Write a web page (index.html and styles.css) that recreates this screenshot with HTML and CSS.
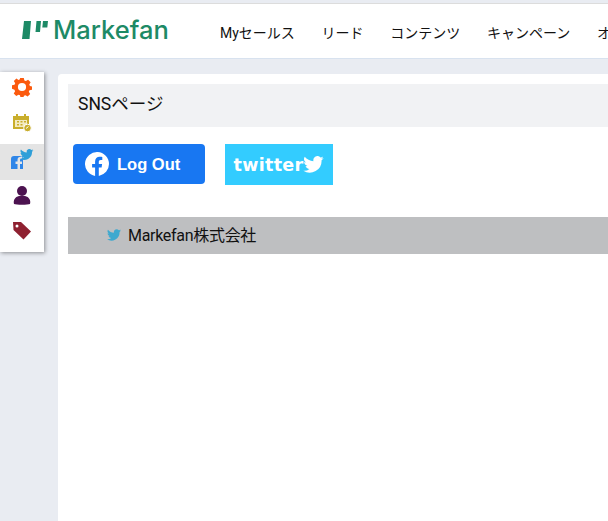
FILE: index.html
```html
<!DOCTYPE html>
<html lang="ja">
<head>
<meta charset="utf-8">
<title>SNSページ</title>
<link rel="stylesheet" href="styles.css">
</head>
<body>
<header class="topbar">
  <div class="logo">
    <svg class="logo-mark" width="26" height="20" viewBox="0 0 26 20"><path fill="#1d8a66" d="M2 1h7l-1.500 18H0zM14.500 1h4.500l-1 11h-4.500zM21 1h5l-.7 6.500h-5z"/></svg>
    <span class="logo-text">Markefan</span>
  </div>
  <nav class="nav">
    <a class="nav-item">Myセールス</a>
    <a class="nav-item">リード</a>
    <a class="nav-item">コンテンツ</a>
    <a class="nav-item">キャンペーン</a>
    <a class="nav-item">オーディエンス</a>
  </nav>
</header>
<div class="main">
  <aside class="sidebar">
    <div class="side-item">
      <svg width="20" height="20" viewBox="0 0 22 22"><path fill="#fb5a0e" fill-rule="evenodd" d="M9 1h4l.6 2.800 1.700.7 2.400-1.500 2.800 2.800-1.500 2.400.7 1.700 2.300.6v3.500l-2.800.6-.7 1.700 1.500 2.400-2.800 2.800-2.400-1.500-1.700.7-.6 2.300H9.400l-.6-2.800-1.700-.7-2.400 1.500-2.800-2.800 1.500-2.400-.7-1.700L0 12.800V9.200l2.800-.6.7-1.700L2 4.500l2.800-2.800 2.400 1.500 1.200-.5zM11 6.500a4.500 4.500 0 1 0 0 9 4.500 4.500 0 0 0 0-9z"/></svg>
    </div>
    <div class="side-item">
      <svg width="20" height="20" viewBox="0 0 20 20"><path fill="#c9ae2c" d="M1 3h3V1h2v2h6V1h2v2h3v13H1z"/><path fill="#f3eac0" d="M3 7h12v7H3z"/><path fill="#c9ae2c" d="M5 8h2v1.500H5zM8.500 8h2v1.500h-2zM12 8h2v1.500h-2zM5 11h2v1.500H5zM8.500 11h2v1.500h-2z"/><circle cx="15.500" cy="15" r="3.800" fill="#c9ae2c" stroke="#fff"/><path d="M14 15.500l2.500-2" stroke="#fff"/></svg>
    </div>
    <div class="side-item side-item-active">
      <svg width="24" height="28" viewBox="0 0 24 28"><path fill="#2f86e8" d="M1 21V11a3 3 0 0 1 3-3h6a3 3 0 0 1 3 3v10h-3v-5h2v-2.500h-2V12c0-.8.5-1.200 2-1.200V8.800C9 8.500 7.500 9.500 7.500 12v1.500H5.500V16h2v5z"/><path fill="#2f9fd8" transform="translate(10 1) scale(.56)" d="M24 2.400c-.9.400-1.800.7-2.800.8 1-.6 1.800-1.600 2.200-2.700-1 .6-2 1-3.100 1.200A4.900 4.900 0 0 0 11.900 6.100C7.800 5.900 4.200 3.900 1.700.9a4.900 4.900 0 0 0 1.500 6.600c-.8 0-1.600-.2-2.200-.6 0 2.400 1.700 4.400 3.900 4.900-.7.200-1.500.2-2.200.1.600 2 2.400 3.400 4.600 3.400A9.900 9.900 0 0 1 0 17.400 14 14 0 0 0 21.500 5c1-.7 1.800-1.600 2.500-2.600z"/></svg>
    </div>
    <div class="side-item">
      <svg width="18" height="20" viewBox="0 0 18 20"><circle cx="9" cy="6" r="5" fill="#4c1350"/><path fill="#4c1350" d="M1 19c-1-4 1-7 5-8h6c4 1 6 4 5 8-2 1-14 1-16 0z"/></svg>
    </div>
    <div class="side-item">
      <svg width="20" height="20" viewBox="0 0 20 20"><path fill="#8f2131" fill-rule="evenodd" d="M1 1h8l10 9.500-7.500 8L1.500 9zM5 3.500a1.500 1.500 0 1 0 0 3 1.500 1.500 0 0 0 0-3z"/></svg>
    </div>
  </aside>
  <main class="panel">
    <h1 class="page-title">SNSページ</h1>
    <div class="actions">
      <button class="fb-button">
        <svg width="24" height="24" viewBox="0 0 24 24"><path fill="#fff" d="M24 12a12 12 0 1 0-13.900 11.900v-8.400H7.100V12h3V9.400c0-3 1.800-4.700 4.500-4.700 1.300 0 2.700.2 2.700.2v3h-1.500c-1.500 0-2 .9-2 1.900V12h3.300l-.5 3.500h-2.800v8.400A12 12 0 0 0 24 12z"/></svg>
        <span>Log Out</span>
      </button>
      <div class="tw-button">
        <span class="tw-text">twitter</span>
        <svg width="21" height="17" viewBox="0 0 24 20"><path fill="#fff" d="M24 2.400c-.9.400-1.800.7-2.800.8 1-.6 1.800-1.600 2.200-2.700-1 .6-2 1-3.100 1.200A4.900 4.900 0 0 0 11.900 6.100C7.800 5.900 4.200 3.900 1.700.9a4.900 4.900 0 0 0 1.500 6.600c-.8 0-1.600-.2-2.200-.6 0 2.400 1.700 4.400 3.900 4.900-.7.200-1.500.2-2.200.1.600 2 2.400 3.400 4.600 3.400A9.900 9.900 0 0 1 0 17.400 14 14 0 0 0 21.500 5c1-.7 1.800-1.600 2.500-2.600z"/></svg>
      </div>
    </div>
    <div class="account-row">
      <svg width="14" height="12" viewBox="0 0 24 20"><path fill="#3fa9cf" d="M24 2.400c-.9.400-1.800.7-2.800.8 1-.6 1.800-1.600 2.200-2.700-1 .6-2 1-3.100 1.200A4.900 4.900 0 0 0 11.900 6.100C7.800 5.900 4.200 3.900 1.700.9a4.900 4.900 0 0 0 1.500 6.600c-.8 0-1.600-.2-2.200-.6 0 2.400 1.700 4.400 3.900 4.900-.7.200-1.500.2-2.200.1.600 2 2.400 3.400 4.600 3.400A9.900 9.900 0 0 1 0 17.400 14 14 0 0 0 21.500 5c1-.7 1.800-1.600 2.500-2.600z"/></svg>
      <span class="account-name">Markefan株式会社</span>
    </div>
  </main>
</div>
</body>
</html>
```
FILE: styles.css
```css
html, body {
  margin: 0;
  height: 100%;
  overflow: hidden;
}
body {
  background: #e9ecf2;
  font-family: "Roboto", "Noto Sans CJK JP", sans-serif;
  color: #111;
  display: flex;
  flex-direction: column;
}
.topbar {
  box-sizing: border-box;
  height: 56px;
  flex: none;
  margin-top: 3px;
  background: #fff;
  border-top: 1px solid #dcdcdc;
  border-bottom: 1px solid #d8e2ef;
  display: flex;
  align-items: center;
  white-space: nowrap;
  overflow: hidden;
}
.logo {
  display: flex;
  align-items: center;
  gap: 5px;
  margin: 0 0 3px 22px;
  width: 198px;
  flex: none;
}
.logo-text {
  font-family: "Inter", sans-serif;
  font-size: 25.5px;
  font-weight: 500;
  color: #1d8a66;
}
.nav {
  display: flex;
  gap: 26.7px;
  margin-top: 1px;
  font-size: 14px;
}
.main {
  flex: 1;
  display: flex;
  align-items: flex-start;
  gap: 14px;
  min-height: 0;
}
.sidebar {
  width: 44px;
  flex: none;
  margin-top: 13px;
  background: #fff;
  box-shadow: 1px 1px 4px rgba(0, 0, 0, .4);
  display: flex;
  flex-direction: column;
}
.side-item {
  box-sizing: border-box;
  height: 36px;
  padding-bottom: 6px;
  display: flex;
  align-items: center;
  justify-content: center;
}
.side-item-active {
  padding-bottom: 0;
  background: #e4e4e4;
}
.panel {
  flex: 1;
  align-self: stretch;
  margin-top: 15px;
  background: #fff;
  border-radius: 4px 0 0 0;
  padding: 10px 0 0 10px;
  min-width: 0;
}
.page-title {
  margin: 0;
  height: 43px;
  box-sizing: border-box;
  padding-left: 10px;
  background: #f1f2f4;
  font-size: 17.5px;
  font-weight: 400;
  line-height: 40px;
}
.actions {
  display: flex;
  align-items: flex-start;
  gap: 20px;
  margin: 17px 0 32px 5px;
}
.fb-button {
  width: 132px;
  height: 40px;
  border: 0;
  border-radius: 4px;
  background: #1877f2;
  color: #fff;
  display: flex;
  align-items: center;
  gap: 8px;
  padding: 0 0 0 12px;
  font-family: "Liberation Sans", sans-serif;
  font-size: 16.5px;
  font-weight: 700;
}
.tw-button {
  width: 108px;
  height: 41px;
  background: #33ccff;
  display: flex;
  align-items: center;
  justify-content: center;
}
.tw-text {
  font-family: "DejaVu Sans", sans-serif;
  font-weight: 700;
  font-size: 17.5px;
  letter-spacing: .3px;
  color: #fff;
}
.account-row {
  box-sizing: border-box;
  height: 37px;
  padding: 0 0 2px 39px;
  background: #bebfc1;
  display: flex;
  align-items: center;
  gap: 7px;
}
.account-name {
  margin-bottom: 2px;
  font-size: 16px;
  letter-spacing: -0.3px;
}
```
